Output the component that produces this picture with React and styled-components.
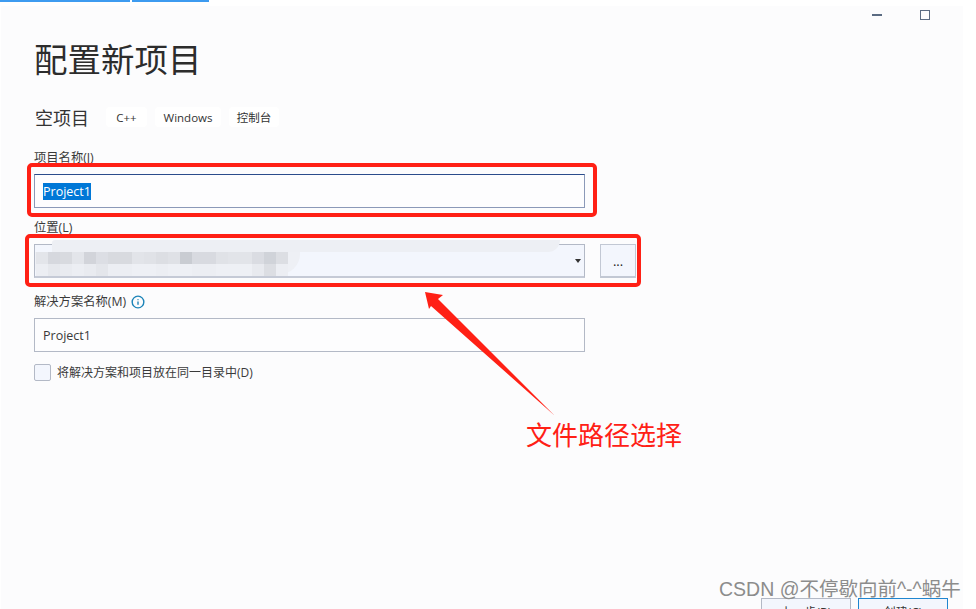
import React from "react";
import styled, { createGlobalStyle } from "styled-components";
import { Info } from "lucide-react";

const cjk = `"Open Sans", "Noto Sans CJK SC", sans-serif`;

const upperBlocks = [
  "#e3e5ea", "#d6d8de", "#d8dadf", "#e3e5ea", "#d2d4da", "#dcdee4", "#d8dadf",
  "#d8dadf", "#e2e4e9", "#e0e2e7", "#dcdee3", "#dfe1e6", "#c9ccd2", "#d8dae0",
  "#d8dae0", "#e0e2e7", "#e2e4e9", "#e2e4e9", "#dadce2", "#d0d3d9", "#dcdee3",
];

const lowerBlocks = [
  "#eceef3", "#e6e8ed", "#e9ebf0", "#eceef3", "#e9ebf0", "#e4e6eb", "#eceef3",
  "#eceef3", "#eef0f5", "#eef0f5", "#eceef3", "#eef0f5", "#eef0f5", "#eceef3",
  "#eceef3", "#eef0f5", "#eef0f5", "#eef0f5", "#e8eaef", "#dcdee3", "#eceef3",
];

const App = () => {
  return (
    <>
      <GlobalStyle />
      <TopLinks>
        <TopLink $width={130} />
        <TopLink $width={77} />
      </TopLinks>
      <Window>
        <TitleBar>
          <MinimizeIcon />
          <MaximizeIcon />
        </TitleBar>
        <Title>配置新项目</Title>
        <TemplateRow>
          <TemplateName>空项目</TemplateName>
          <Chip $width={41}>C++</Chip>
          <Chip $width={66}>Windows</Chip>
          <Chip $width={50}>控制台</Chip>
        </TemplateRow>

        <FieldLabel $top={23}>项目名称(J)</FieldLabel>
        <TextBox $active>
          <Selected>Project1</Selected>
        </TextBox>

        <FieldLabel $top={12}>位置(L)</FieldLabel>
        <LocationRow>
          <ComboBox>
            <BlurLayer />
            <BlurWash />
            <BlurRow $top={7}>
              {upperBlocks.map((shade, index) => (
                <BlurBlock key={index} $shade={shade} />
              ))}
            </BlurRow>
            <BlurRow $top={19}>
              {lowerBlocks.map((shade, index) => (
                <BlurBlock key={index} $shade={shade} />
              ))}
            </BlurRow>
            <ComboArrow />
          </ComboBox>
          <BrowseButton>...</BrowseButton>
        </LocationRow>

        <FieldLabel $top={16}>
          解决方案名称(M)
          <InfoIcon size={14} strokeWidth={2.4} />
        </FieldLabel>
        <TextBox>Project1</TextBox>

        <CheckRow>
          <CheckBox />
          <CheckLabel>将解决方案和项目放在同一目录中(D)</CheckLabel>
        </CheckRow>

        <Footer>
          <FooterButton>上一步(B)</FooterButton>
          <FooterButton $primary>创建(C)</FooterButton>
        </Footer>
      </Window>

      <Highlight $left={27} $top={163} $width={570} $height={54} />
      <Highlight $left={25} $top={234} $width={616} $height={53} />
      <ArrowDrawing viewBox="0 0 140 140">
        <path d="M0 1 L18 4 L13 8 L129.5 124.5 L6 15 L4 18 Z" fill="#ff2015" />
      </ArrowDrawing>
      <Callout>文件路径选择</Callout>
      <Watermark>CSDN @不停歇向前^-^蜗牛</Watermark>
    </>
  );
};

const GlobalStyle = createGlobalStyle`
  html, body {
    margin: 0;
    height: 609px;
    overflow: hidden;
    background: #ffffff;
    font-family: ${cjk};
  }
`;

const TopLinks = styled.div`
  display: flex;
  gap: 2px;
  height: 2px;
`;

const TopLink = styled.div`
  width: ${(p) => p.$width}px;
  background: #3d9bf0;
`;

const Window = styled.div`
  display: flex;
  flex-direction: column;
  width: 962px;
  height: 603px;
  margin: 4px 0 0 1px;
  padding-left: 33px;
  box-sizing: border-box;
  overflow: hidden;
  background: #fcfcfd;
  color: #2c2c2c;
`;

const TitleBar = styled.div`
  display: flex;
  justify-content: flex-end;
  align-items: flex-start;
  gap: 38px;
  height: 24px;
  padding: 4px 33px 0 0;
  box-sizing: border-box;
`;

const MinimizeIcon = styled.div`
  width: 10px;
  height: 2px;
  margin-top: 4px;
  background: #5b6b82;
`;

const MaximizeIcon = styled.div`
  width: 10px;
  height: 10px;
  box-sizing: border-box;
  border: 1.5px solid #5b6b82;
`;

const Title = styled.h1`
  margin: 7px 0 0;
  font-size: 33.5px;
  line-height: 44px;
  font-weight: 400;
`;

const TemplateRow = styled.div`
  display: flex;
  align-items: center;
  height: 20px;
  margin: 26px 0 0 1px;
`;

const TemplateName = styled.div`
  width: 71px;
  font-size: 18px;
  color: #333;
`;

const Chip = styled.div`
  display: flex;
  align-items: center;
  justify-content: center;
  width: ${(p) => p.$width}px;
  height: 20px;
  margin-right: 8px;
  border-radius: 4px;
  background: #ffffff;
  font-size: 11.5px;
  color: #333;
`;

const FieldLabel = styled.div`
  display: flex;
  align-items: center;
  gap: 5px;
  height: 16px;
  margin-top: ${(p) => p.$top}px;
  font-size: 12.3px;
  line-height: 16px;
  color: #3a3a3a;
`;

const InfoIcon = styled(Info)`
  color: #1c84b8;
`;

const TextBox = styled.div`
  display: flex;
  align-items: center;
  width: 551px;
  height: 34px;
  margin-top: 8px;
  padding-left: 8px;
  box-sizing: border-box;
  border: 1px solid ${(p) => (p.$active ? "#8b99b8" : "#b3b9c6")};
  border-top-color: ${(p) => (p.$active ? "#2b4c8c" : "#b3b9c6")};
  background: #fdfdfe;
  font-size: 12.5px;
  color: #3a3a3a;
`;

const Selected = styled.span`
  padding: 0;
  background: #0078d7;
  color: #ffffff;
`;

const LocationRow = styled.div`
  display: flex;
  gap: 15px;
  margin-top: 8px;
`;

const ComboBox = styled.div`
  position: relative;
  width: 551px;
  height: 34px;
  box-sizing: border-box;
  border: 1px solid #b3b9c6;
  border-bottom: 2px solid #c5cad6;
  background: #f3f6fd;
`;

const BlurLayer = styled.div`
  position: absolute;
  top: -5px;
  left: 17px;
  right: 24px;
  bottom: 24px;
  border-radius: 8px 0 30px 0;
  background: #edeff4;
`;

const BlurWash = styled.div`
  position: absolute;
  top: 7px;
  left: 0;
  bottom: 2px;
  width: 265px;
  border-radius: 0 0 20px 6px;
  background: #eef0f5;
`;

const BlurRow = styled.div`
  position: absolute;
  top: ${(p) => p.$top}px;
  left: 1px;
  display: flex;
`;

const BlurBlock = styled.div`
  width: 12px;
  height: 12px;
  background: ${(p) => p.$shade};
`;

const ComboArrow = styled.div`
  position: absolute;
  top: 14px;
  right: 3px;
  border-top: 4px solid #333;
  border-left: 3px solid transparent;
  border-right: 3px solid transparent;
`;

const BrowseButton = styled.div`
  display: flex;
  align-items: center;
  justify-content: center;
  width: 36px;
  height: 34px;
  box-sizing: border-box;
  border: 1px solid #c2c8d4;
  border-bottom-width: 2px;
  background: #f3f6fd;
  font-size: 13px;
  color: #222;
`;

const CheckRow = styled.div`
  display: flex;
  align-items: center;
  gap: 6px;
  margin-top: 11px;
`;

const CheckBox = styled.div`
  width: 17px;
  height: 17px;
  box-sizing: border-box;
  border: 1px solid #b3b9c6;
  border-radius: 2px;
  background: #f3f6fd;
`;

const CheckLabel = styled.div`
  font-size: 12px;
  color: #3a3a3a;
`;

const Footer = styled.div`
  display: flex;
  justify-content: flex-end;
  gap: 7px;
  margin-top: auto;
  margin-bottom: -17px;
  padding-right: 15px;
`;

const FooterButton = styled.div`
  display: flex;
  align-items: center;
  justify-content: center;
  width: 90px;
  height: 28px;
  box-sizing: border-box;
  border: 1px solid ${(p) => (p.$primary ? "#1f86d0" : "#b3b9c6")};
  background: #f3f6fd;
  font-size: 12px;
  color: #333;
`;

const Highlight = styled.div`
  position: absolute;
  left: ${(p) => p.$left}px;
  top: ${(p) => p.$top}px;
  width: ${(p) => p.$width}px;
  height: ${(p) => p.$height}px;
  box-sizing: border-box;
  border: 4px solid #ff2015;
  border-radius: 5px;
`;

const ArrowDrawing = styled.svg`
  position: absolute;
  left: 425px;
  top: 291px;
  width: 140px;
  height: 140px;
`;

const Callout = styled.div`
  position: absolute;
  left: 526px;
  top: 417px;
  font-size: 26px;
  line-height: 36px;
  color: #ff2015;
`;

const Watermark = styled.div`
  position: absolute;
  left: 719px;
  top: 577px;
  font-family: "Liberation Sans", "Noto Sans CJK SC", sans-serif;
  font-size: 19.5px;
  line-height: 24px;
  white-space: nowrap;
  color: #8c8c8c;
`;

export default App;
